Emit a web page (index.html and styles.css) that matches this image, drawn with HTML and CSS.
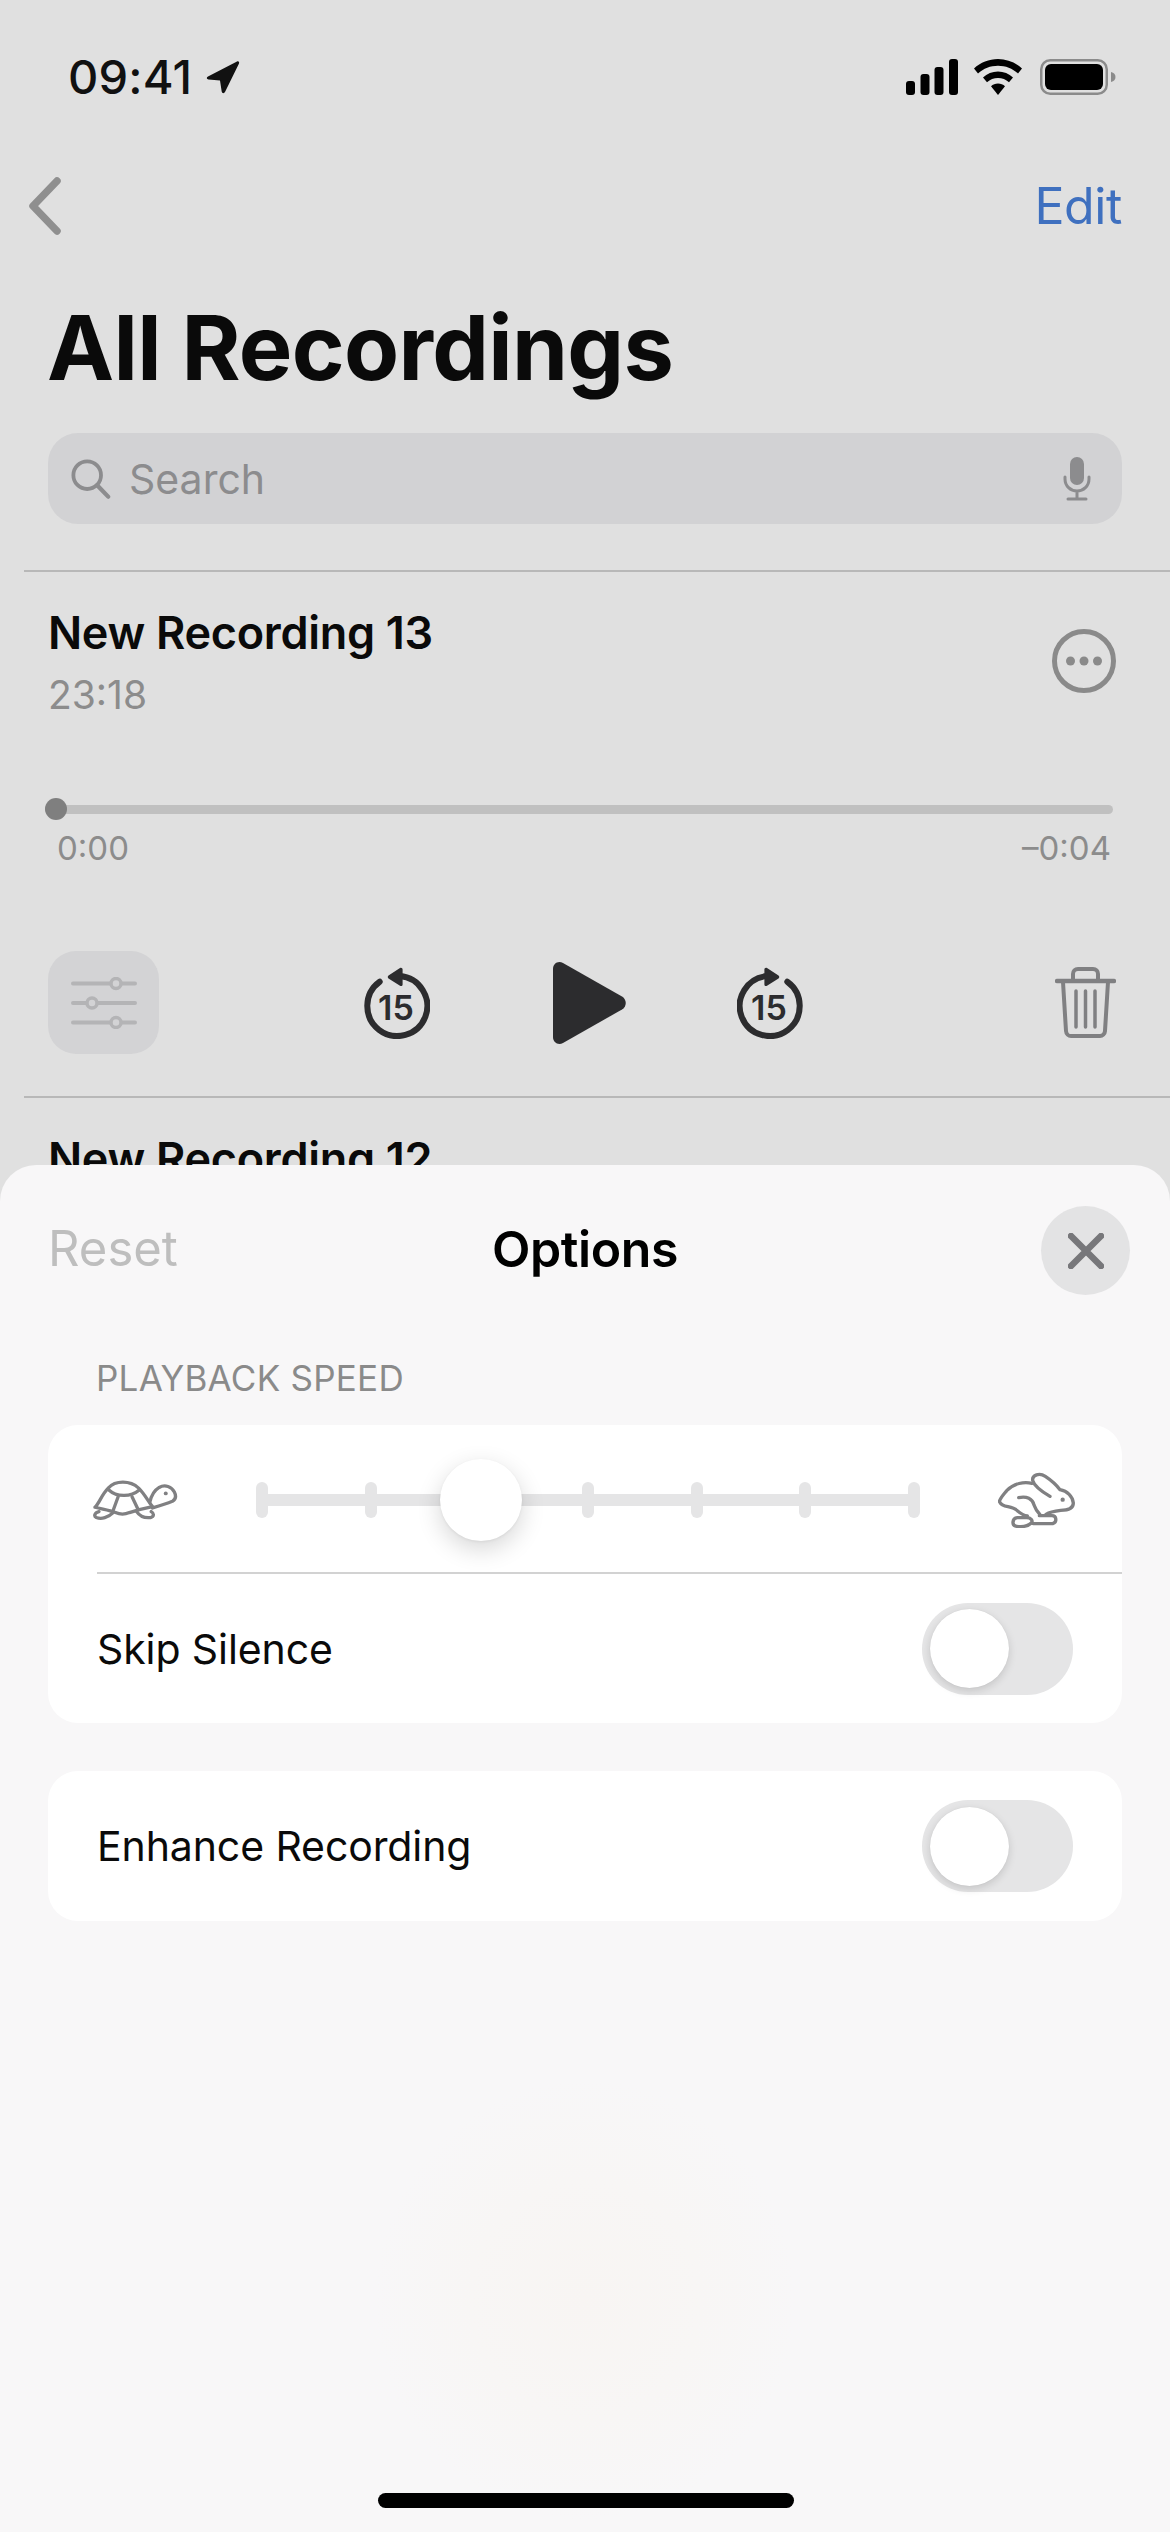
FILE: index.html
```html
<!DOCTYPE html>
<html lang="en">
<head>
<meta charset="utf-8">
<title>All Recordings</title>
<link rel="stylesheet" href="styles.css">
</head>
<body>
<div class="phone">
  <header class="status">
    <div class="status-left">
      <span class="clock">09:41</span>
      <svg class="loc" viewBox="0 0 36 36"><path d="M3 17.500 32 2.500c1.500-.7 2.600.4 2 2L20 33c-.8 1.700-3 1.400-3.300-.4L15 21.500 3.500 20.500c-2-.2-2.300-2.100-.5-3z"/></svg>
    </div>
    <div class="status-right">
      <svg class="signal" viewBox="0 0 52 36"><rect x="0" y="22" width="9" height="14" rx="3"/><rect x="14.500" y="15" width="9" height="21" rx="3"/><rect x="28.500" y="8" width="9" height="28" rx="3"/><rect x="43" y="0" width="9" height="36" rx="3"/></svg>
      <svg class="wifi" viewBox="0 0 48 36"><path d="M24 0c9 0 17.500 3.500 24 9.500l-4 5C38.500 9.500 31.500 6.800 24 6.800S9.500 9.500 4 14.500l-4-5C6.500 3.500 15 0 24 0z"/><path d="M24 12.500c5.700 0 11 2.200 15 6l-4 4.800c-3-2.700-6.900-4.200-11-4.200s-8 1.500-11 4.200l-4-4.800c4-3.800 9.300-6 15-6z"/><path d="M24 24.500c2.700 0 5.200 1 7 2.700L24 36l-7-8.800c1.800-1.700 4.300-2.700 7-2.700z"/></svg>
      <svg class="battery" viewBox="0 0 76 36"><rect x="1.250" y="1.250" width="65.500" height="33.500" rx="9" fill="none" stroke="#8b8b8b" stroke-width="2.500"/><rect x="5" y="5" width="58" height="26" rx="6"/><path d="M71 13c3 .5 4.500 2.500 4.500 5s-1.500 4.500-4.500 5z" fill="#8b8b8b"/></svg>
    </div>
  </header>

  <nav class="nav">
    <svg class="chevron" viewBox="0 0 34 58"><path d="M29 4 5 29l24 25" fill="none" stroke="#8f8f8f" stroke-width="7.500" stroke-linecap="round" stroke-linejoin="round"/></svg>
    <span class="edit">Edit</span>
  </nav>

  <h1 class="title">All Recordings</h1>

  <div class="search">
    <svg class="search-glass" viewBox="0 0 42 42"><circle cx="17" cy="17" r="14.500" fill="none" stroke="#8c8c8e" stroke-width="4"/><path d="m27.500 27.500 11.500 12" fill="none" stroke="#8c8c8e" stroke-width="4.500" stroke-linecap="round"/></svg>
    <span class="search-text">Search</span>
    <svg class="search-mic" viewBox="0 0 30 44"><rect x="8" y="0" width="14" height="28" rx="7" fill="#8c8c8e"/><path d="M3 20v2c0 7 5.500 12 12 12s12-5 12-12v-2M15 34v7M6 42h18" fill="none" stroke="#8c8c8e" stroke-width="3" stroke-linecap="round"/></svg>
  </div>

  <div class="divider divider-first"></div>

  <section class="row">
    <div class="row-head">
      <div>
        <div class="rec-name">New Recording 13</div>
        <div class="rec-time">23:18</div>
      </div>
      <svg class="more" viewBox="0 0 64 64"><circle cx="32" cy="32" r="29.500" fill="none" stroke="#8a8a8a" stroke-width="5"/><circle cx="18.500" cy="32" r="4.500" fill="#8a8a8a"/><circle cx="32" cy="32" r="4.500" fill="#8a8a8a"/><circle cx="45.500" cy="32" r="4.500" fill="#8a8a8a"/></svg>
    </div>

    <div class="scrub"><span class="scrub-knob"></span></div>
    <div class="scrub-times"><span>0:00</span><span>–0:04</span></div>

    <div class="controls">
      <div class="opt-btn">
        <svg class="sliders" viewBox="0 0 66 52"><g fill="none" stroke="#b4b4b6" stroke-width="4" stroke-linecap="round"><path d="M2 6.500h62M2 26h62M2 45.500h62"/></g><g fill="#d3d3d5" stroke="#b4b4b6" stroke-width="3.500"><circle cx="45" cy="6.500" r="5"/><circle cx="21" cy="26" r="5"/><circle cx="45" cy="45.500" r="5"/></g></svg>
      </div>
      <div class="transport">
        <svg class="skip" viewBox="0 0 66 72"><path d="M15.700 14.700A30 30 0 1 0 35.700 9.100" fill="none" stroke="#2c2c2e" stroke-width="6" stroke-linecap="round"/><path d="M24.500 8.500 36 1c1.200-.8 2.600 0 2.600 1.400v15c0 1.400-1.400 2.200-2.600 1.400L24.500 11.500c-1-.8-1-2.200 0-3z" fill="#2c2c2e"/><text x="32" y="52.500" text-anchor="middle" class="skip-num">15</text></svg>
        <svg class="play" viewBox="0 0 73 82"><path d="M0 7C0 1.500 5-1.500 10 1l59 33.500c5 3 5 10 0 13L10 81C5 83.500 0 80.500 0 75z" fill="#2c2c2e"/></svg>
        <svg class="skip" viewBox="0 0 66 72"><path d="M50.300 14.700A30 30 0 1 1 30.300 9.100" fill="none" stroke="#2c2c2e" stroke-width="6" stroke-linecap="round"/><path d="M41.500 8.500 30 1c-1.200-.8-2.600 0-2.600 1.400v15c0 1.400 1.400 2.200 2.600 1.400l11.500-7.300c1-.8 1-2.200 0-3z" fill="#2c2c2e"/><text x="32" y="52.500" text-anchor="middle" class="skip-num">15</text></svg>
      </div>
      <svg class="trash" viewBox="0 0 61 71"><g fill="none" stroke="#808082" stroke-width="4" stroke-linecap="round" stroke-linejoin="round"><path d="M18 13V7c0-3 2-5 5-5h15c3 0 5 2 5 5v6"/><path d="M2 14h57" stroke-width="4.500"/><path d="M8 15l3 49c.2 3 2.500 5 5 5h29c2.500 0 4.800-2 5-5l3-49"/><path d="M21 24v36M30.500 24v36M40 24v36" stroke-width="3.500"/></g></svg>
    </div>
  </section>

  <div class="divider divider-second"></div>
  <div class="rec-name rec-next">New Recording 12</div>

  <div class="sheet">
    <div class="sheet-head">
      <span class="reset">Reset</span>
      <span class="sheet-title">Options</span>
      <div class="close">
        <svg class="close-x" viewBox="0 0 36 36"><path d="M3 3l30 30M33 3 3 33" fill="none" stroke="#77777a" stroke-width="6.500" stroke-linecap="round"/></svg>
      </div>
    </div>

    <div class="section-label">PLAYBACK SPEED</div>

    <div class="card">
      <div class="speed">
        <svg class="turtle" viewBox="100 115 260 130"><g fill="none" stroke="#808082" stroke-width="10" stroke-linecap="round" stroke-linejoin="round"><path d="M106 202c14-14 20-38 40-58 22-24 66-24 92 0 20 20 28 40 42 56-20 4-40 8-70 18-14 6-28 6-42 0-20-8-40-10-62-16z"/><path d="M146 148c26 24 68 24 94 2"/><path d="M176 170l-16 44M218 170l18 38"/><path d="M272 186c4-18 12-34 28-44 18-10 38-2 46 14 6 12 4 22-6 28-20 8-40 14-60 20"/><path d="M118 215c-14 4-16 14-8 18 16 6 36 0 50-14M232 215c8 12 24 20 42 18 10-2 12-12 2-18"/></g><circle cx="320" cy="160" r="6" fill="#808082"/></svg>
        <div class="track">
          <i class="tick"></i><i class="tick"></i><i class="tick"></i><i class="tick"></i><i class="tick"></i><i class="tick"></i><i class="tick"></i>
          <span class="speed-knob"></span>
        </div>
        <svg class="rabbit" viewBox="85 97 232 168"><g fill="none" stroke="#808082" stroke-width="10" stroke-linecap="round" stroke-linejoin="round"><path d="M240 170c-24-14-48-32-52-48-2-16 20-24 38-12 18 12 32 24 44 40 22 4 38 20 40 40 0 14-14 22-38 22-18 2-32 4-44 12"/><path d="M186 131c-24-6-54 0-76 22-8 10-18 20-22 32 4 10 14 14 26 16 10 2 20 4 28 12 12 10 18 14 30 16"/><path d="M146 174c24-6 42 4 46 22 4 12 10 20 18 29"/><path d="M208 228h38c14 0 16 20 2 24h-58"/><path d="M170 234h-28c-16 2-18 24-2 26 16 2 34 0 44-10 6-8-2-16-14-16z"/></g><circle cx="278" cy="180" r="6.500" fill="#808082"/></svg>
      </div>
      <div class="sep"></div>
      <div class="option option-first">
        <span>Skip Silence</span>
        <div class="toggle"><span class="toggle-knob"></span></div>
      </div>
    </div>

    <div class="card card-second">
      <div class="option">
        <span>Enhance Recording</span>
        <div class="toggle"><span class="toggle-knob"></span></div>
      </div>
    </div>

    <div class="home-bar"></div>
  </div>
</div>
</body>
</html>
```

FILE: styles.css
```css
* { box-sizing: border-box; }
html, body { margin: 0; padding: 0; }
body { width: 1170px; height: 2532px; overflow: hidden; font-family: Inter, "Liberation Sans", sans-serif; color: #000; }
svg { display: block; flex: none; }

.phone { position: relative; width: 1170px; height: 2532px; overflow: hidden; background: #e0e0e0; padding-top: 50px; }

.status { display: flex; justify-content: space-between; align-items: center; height: 54px; padding: 0 54px 0 68px; }
.status-left { display: flex; align-items: center; gap: 13px; }
.clock { font-size: 47px; font-weight: 500; line-height: 54px; letter-spacing: .2px; color: #111; }
.loc { width: 36px; height: 36px; fill: #111; }
.status-right { display: flex; align-items: center; }
.signal { width: 52px; height: 36px; fill: #000; }
.wifi { width: 48px; height: 36px; margin-left: 16px; fill: #000; }
.battery { width: 76px; height: 36px; margin-left: 18px; fill: #000; }

.nav { display: flex; justify-content: space-between; align-items: center; height: 60px; margin-top: 72px; padding: 0 48px 0 28px; }
.chevron { width: 34px; height: 58px; }
.edit { font-size: 50px; line-height: 60px; color: #3f70bf; letter-spacing: -.4px; }

.title { margin: 60px 0 0 47px; font-size: 90px; font-weight: 700; line-height: 104px; letter-spacing: -.7px; color: #0a0a0a; }

.search { display: flex; align-items: center; height: 91px; margin: 33px 48px 0; padding: 0 30px 0 23px; border-radius: 30px; background: #d2d2d4; }
.search-glass { width: 40px; height: 40px; }
.search-text { margin-left: 18px; font-size: 41px; line-height: 60px; color: #8c8c8e; }
.search-mic { width: 30px; height: 44px; margin-left: auto; }

.divider { height: 2px; margin-left: 24px; background: #b8b8b8; }
.divider-first { margin-top: 46px; }
.divider-second { margin-top: 42px; }

.row-head { display: flex; justify-content: space-between; align-items: flex-start; padding: 41px 54px 0 48px; }
.rec-name { font-size: 45px; font-weight: 600; line-height: 40px; letter-spacing: -.3px; color: #0a0a0a; }
.rec-time { margin-top: 22px; font-size: 39px; line-height: 40px; color: #8c8c8c; }
.rec-next { margin: 41px 0 0 48px; }
.more { width: 64px; height: 64px; margin-top: 16px; }

.scrub { position: relative; height: 9px; margin: 90px 57px 0 45px; border-radius: 5px; background: #c0c0c0; }
.scrub-knob { position: absolute; left: 0; top: -7px; width: 22px; height: 22px; border-radius: 50%; background: #7f7f7f; }
.scrub-times { display: flex; justify-content: space-between; margin-top: 17px; padding: 0 59px 0 57px; font-size: 33px; line-height: 34px; color: #8c8c8c; }

.controls { display: flex; align-items: center; height: 103px; margin-top: 86px; padding: 0 54px 0 48px; }
.opt-btn { display: flex; align-items: center; justify-content: center; width: 111px; height: 103px; border-radius: 28px; background: #d3d3d5; }
.sliders { width: 66px; height: 52px; }
.transport { display: flex; align-items: center; margin-left: 205px; }
.skip { width: 66px; height: 72px; }
.skip-num { font: 600 34px Inter, sans-serif; fill: #2c2c2e; }
.play { width: 73px; height: 82px; margin: 0 111px 0 123px; }
.trash { width: 61px; height: 71px; margin-left: auto; }

.sheet { position: absolute; left: 0; right: 0; top: 1165px; bottom: 0; border-radius: 36px 36px 0 0; background: radial-gradient(ellipse 210px 220px at 585px 1135px, #f8f5f3 0%, #f8f6f5 55%, #f8f7f8 100%), #f8f8f8; }
.sheet-head { display: grid; grid-template-columns: 1fr auto 1fr; align-items: center; height: 89px; margin-top: 41px; padding: 0 40px; }
.reset { margin-left: 8px; padding-bottom: 4px; font-size: 49px; line-height: 60px; color: #bebebe; }
.sheet-title { padding-bottom: 4px; font-size: 50px; font-weight: 600; line-height: 60px; letter-spacing: -.4px; }
.close { display: flex; align-items: center; justify-content: center; justify-self: end; width: 89px; height: 89px; border-radius: 50%; background: #e3e3e4; }
.close-x { width: 36px; height: 36px; }

.section-label { margin-top: 63px; padding-left: 96px; font-size: 35px; line-height: 40px; letter-spacing: .25px; color: #8a8a8a; }

.card { margin: 27px 48px 0; border-radius: 30px; background: #fff; }
.card-second { margin-top: 48px; }
.speed { display: flex; align-items: center; height: 147px; padding: 3px 46px 0 45px; }
.turtle { width: 86px; height: 44px; }
.track { position: relative; display: flex; justify-content: space-between; align-items: center; flex: 1; height: 36px; margin: 0 78px 0 77px; }
.track::before { content: ""; position: absolute; left: 0; right: 0; top: 12px; height: 12px; background: #e5e5e6; }
.tick { position: relative; width: 12px; height: 36px; border-radius: 6px; background: #e5e5e6; }
.speed-knob { position: absolute; left: 184px; top: -23px; width: 82px; height: 82px; border-radius: 50%; background: #fff; box-shadow: 0 8px 24px rgba(0,0,0,.16), 0 1px 3px rgba(0,0,0,.06); }
.rabbit { width: 78px; height: 56px; }
.sep { height: 2px; margin-left: 49px; background: #d2d2d2; }

.option { display: flex; justify-content: space-between; align-items: center; height: 150px; padding: 0 49px; font-size: 41px; line-height: 52px; letter-spacing: -.1px; color: #0a0a0a; }
.option-first { height: 149px; }
.toggle { display: flex; align-items: center; width: 151px; height: 92px; padding-left: 8px; border-radius: 46px; background: #e5e5e6; }
.toggle-knob { width: 79px; height: 79px; border-radius: 50%; background: #fff; box-shadow: 0 3px 8px rgba(0,0,0,.14), 0 0 1px rgba(0,0,0,.1); }

.home-bar { position: absolute; left: 378px; bottom: 24px; width: 416px; height: 15px; border-radius: 8px; background: #000; }
```
